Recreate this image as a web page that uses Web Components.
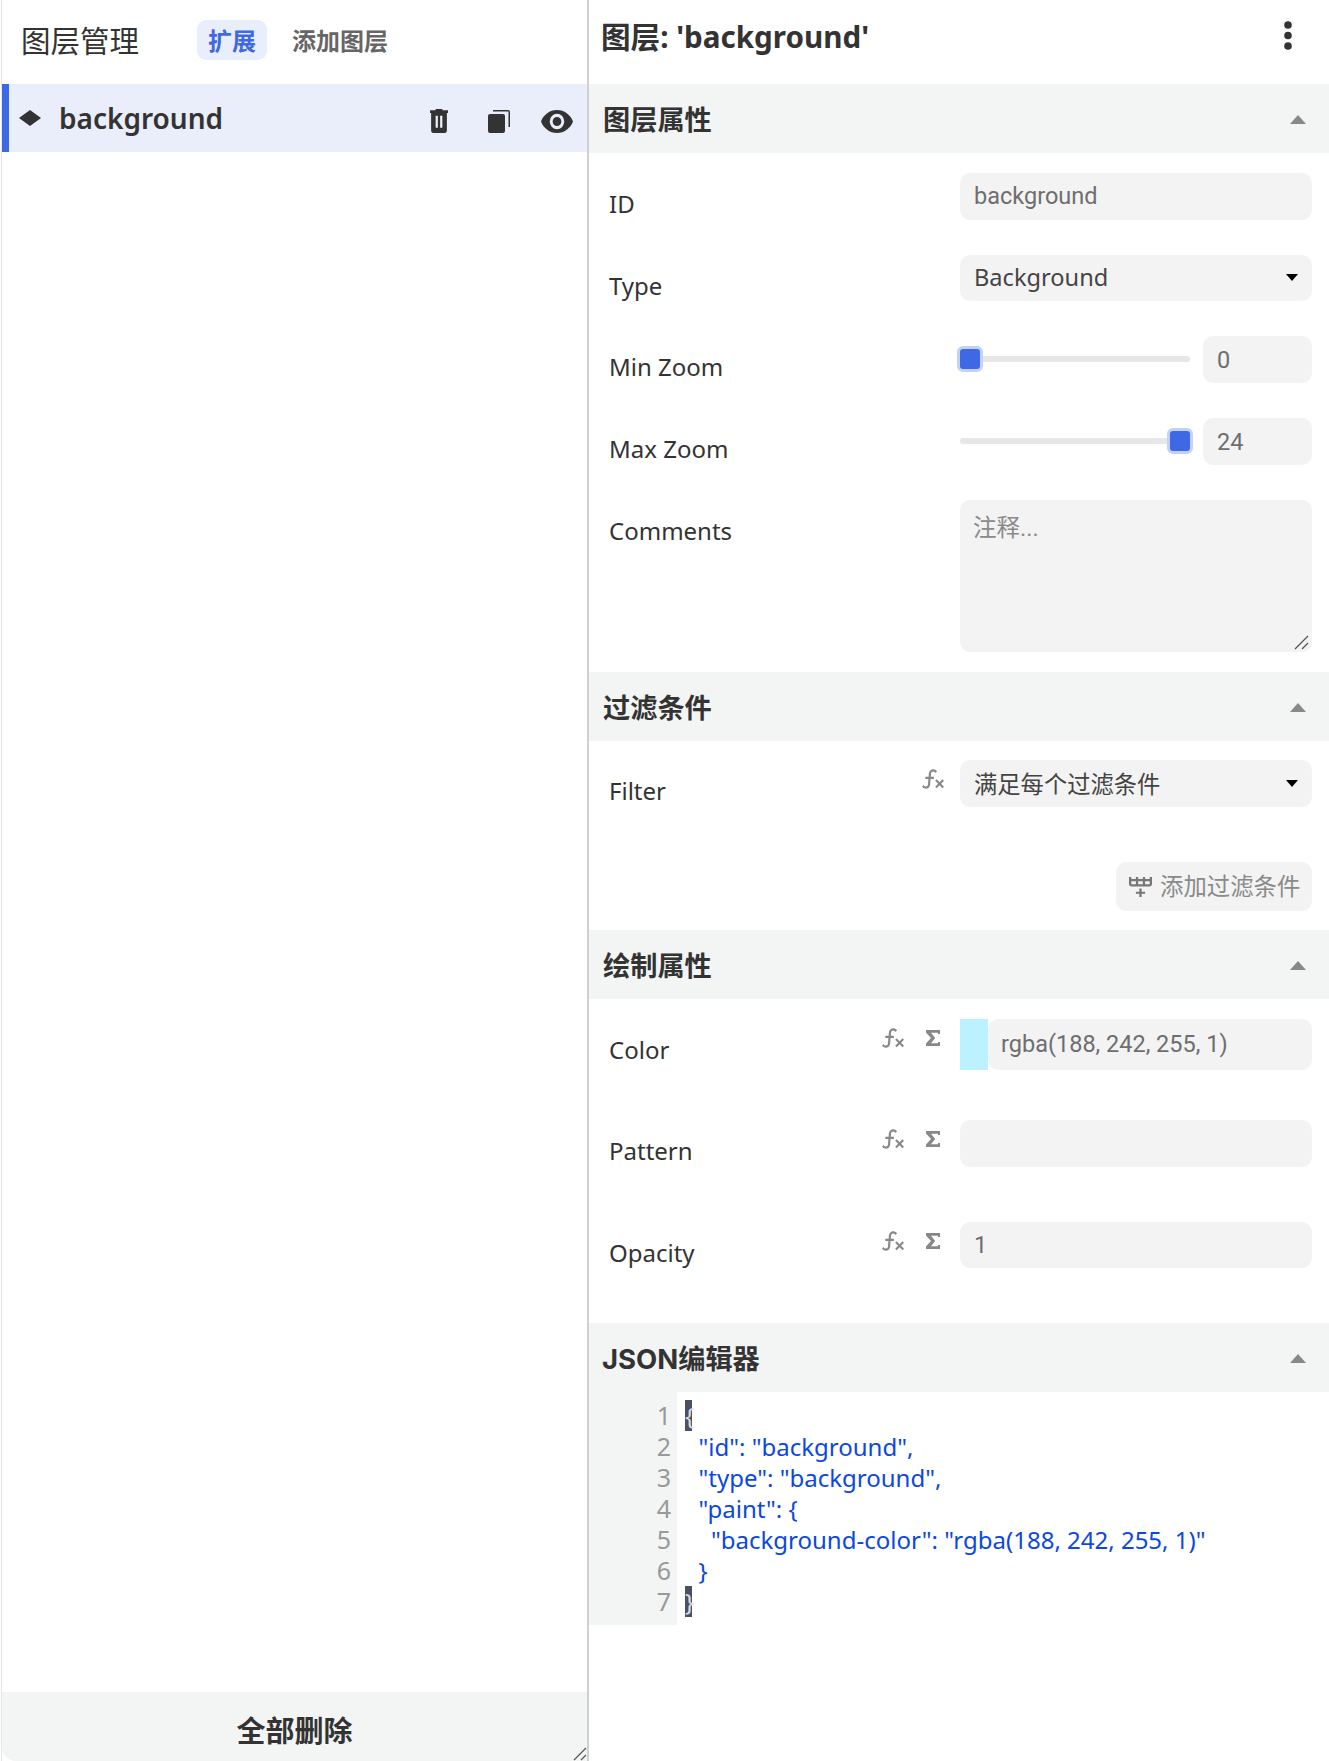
<!DOCTYPE html>
<html lang="zh">
<head>
<meta charset="utf-8">
<title>图层管理</title>
<style>
  html, body { margin: 0; padding: 0; background: #fff; }
  body { font-family: "Noto Sans", "Noto Sans CJK SC", sans-serif; color: #333; }
  app-shell { height: 1761px; }
</style>
</head>
<body>
<app-shell>
  <layer-list slot="left"></layer-list>
  <div slot="right">
    <layer-title>图层: 'background'</layer-title>

    <section-head>图层属性</section-head>
    <prop-row label="ID" pad="20" h="46.5" gap="35"><field-box>background</field-box></prop-row>
    <prop-row label="Type" h="46.5" gap="35"><field-box select>Background</field-box></prop-row>
    <prop-row label="Min Zoom" h="47" gap="35"><zoom-slider value="0"></zoom-slider></prop-row>
    <prop-row label="Max Zoom" h="47" gap="35"><zoom-slider value="24"></zoom-slider></prop-row>
    <prop-row label="Comments" h="152" gap="20"><field-box area>注释...</field-box></prop-row>

    <section-head>过滤条件</section-head>
    <prop-row label="Filter" pad="19" h="47" gap="55" icons="fx" icon-gap="16"><field-box select cjk>满足每个过滤条件</field-box></prop-row>
    <add-filter></add-filter>

    <section-head>绘制属性</section-head>
    <prop-row label="Color" pad="20" h="51" gap="50" icons="fx sigma"><field-box swatch="rgb(188,242,255)">rgba(188, 242, 255, 1)</field-box></prop-row>
    <prop-row label="Pattern" h="47" gap="55" icons="fx sigma"><field-box></field-box></prop-row>
    <prop-row label="Opacity" h="46" gap="55" icons="fx sigma"><field-box>1</field-box></prop-row>

    <section-head latin="Inter"><span style="font-size:27.5px">JSON</span>编辑器</section-head>
    <json-view></json-view>
  </div>
</app-shell>

<script>
  class AppShell extends HTMLElement {
    constructor() {
      super();
      this.attachShadow({mode: 'open'}).innerHTML = `
        <style>
          :host { display: flex; width: 1329px; }
          .left { width: 585px; margin-left: 1px; border-left: 1px solid #e4e4e4; border-right: 2px solid #cfd1d1; height: 100%; display: flex; }
          .right { flex: 1; min-width: 0; }
          ::slotted([slot=left]) { flex: 1; }
        </style>
        <div class="left"><slot name="left"></slot></div>
        <div class="right"><slot name="right"></slot></div>`;
    }
  }

  class LayerList extends HTMLElement {
    constructor() {
      super();
      this.attachShadow({mode: 'open'}).innerHTML = `
        <style>
          :host { display: flex; flex-direction: column; position: relative; }
          header { height: 84px; display: flex; align-items: center; padding: 0 0 4px 19px; box-sizing: border-box; }
          h1 { margin: -2px 0 0; font: 400 29.5px "Noto Sans CJK SC", sans-serif; width: 176px; color: #333; }
          .tab { font: 700 24px "Noto Sans CJK SC", sans-serif; color: #666; height: 40px; line-height: 40px; border-radius: 9px; padding: 0 11px; }
          .tab.on { background: #e9eefb; color: #3e68e4; margin-right: 15px; }
          .tab.off { padding: 0 10px; }
          .item { height: 68px; background: #e9eefa; border-left: 7px solid #3e68e4; display: flex; align-items: center; box-sizing: border-box; }
          .item .diamond { margin-left: 10px; width: 22px; height: 16px; }
          .item b { font: 600 28px "Noto Sans", sans-serif; color: #333; margin: 0 0 0 18px; flex: 1; }
          .item svg { display: block; fill: #333; }
          .acts { display: flex; align-items: center; margin: 6px 14px 0 0; }
          .space { flex: 1; }
          footer { height: 69px; background: #f3f5f5; border-radius: 0 0 0 14px; display: flex; align-items: center; justify-content: center; padding-top: 4px; box-sizing: border-box; font: 700 29px "Noto Sans CJK SC", sans-serif; color: #333; position: relative; }
          footer svg { position: absolute; right: 0; bottom: 0; }
        </style>
        <header><h1>图层管理</h1><span class="tab on">扩展</span><span class="tab off">添加图层</span></header>
        <div class="item">
          <svg class="diamond" viewBox="0 0 22 16" preserveAspectRatio="none"><path d="M11 0 L22 8 L11 16 L0 8 Z"/></svg>
          <b>background</b>
          <div class="acts">
            <svg width="18" height="24" viewBox="4 3 16 18" preserveAspectRatio="none"><path d="M9 3V4H4V6H5V19A2 2 0 0 0 7 21H17A2 2 0 0 0 19 19V6H20V4H15V3H9M9 8H11V17H9V8M13 8H15V17H13V8Z"/></svg>
            <svg style="margin-left:40px" width="22" height="23" viewBox="0 0 22 23"><path d="M2 4h13a2 2 0 0 1 2 2v15a2 2 0 0 1-2 2H2a2 2 0 0 1-2-2V6a2 2 0 0 1 2-2zM5 0h15a2 2 0 0 1 2 2v15h-1.500V1.500H5z"/></svg>
            <svg style="margin-left:31px" width="32" height="23" viewBox="1 4.500 22 15" preserveAspectRatio="none"><path d="M12 9A3 3 0 0 0 9 12A3 3 0 0 0 12 15A3 3 0 0 0 15 12A3 3 0 0 0 12 9M12 17A5 5 0 0 1 7 12A5 5 0 0 1 12 7A5 5 0 0 1 17 12A5 5 0 0 1 12 17M12 4.500C7 4.500 2.730 7.610 1 12C2.730 16.390 7 19.500 12 19.500C17 19.500 21.270 16.390 23 12C21.270 7.610 17 4.500 12 4.500Z"/></svg>
          </div>
        </div>
        <div class="space"></div>
        <footer>全部删除<svg width="16" height="16" viewBox="0 0 16 16"><path d="M15 3 3 15M15 10l-5 5" stroke="#555" stroke-width="1.2" fill="none"/></svg></footer>`;
    }
  }

  class LayerTitle extends HTMLElement {
    constructor() {
      super();
      this.attachShadow({mode: 'open'}).innerHTML = `
        <style>
          :host { display: flex; align-items: center; height: 84px; padding: 0 37px 14px 12px; box-sizing: border-box; justify-content: space-between; font: 700 29.6px "Noto Sans", "Noto Sans CJK SC", sans-serif; color: #333; }
          svg { display: block; }
        </style>
        <span><slot></slot></span>
        <svg width="8" height="29" viewBox="0 0 8 29"><circle cx="4" cy="4" r="3.800" fill="#333"/><circle cx="4" cy="14.500" r="3.800" fill="#333"/><circle cx="4" cy="25" r="3.800" fill="#333"/></svg>`;
    }
  }

  class SectionHead extends HTMLElement {
    constructor() {
      super();
      this.attachShadow({mode: 'open'}).innerHTML = `
        <style>
          :host { display: flex; align-items: center; justify-content: space-between; height: 69px; background: #f3f5f5; padding: 0 23px 2px 14px; box-sizing: border-box; font: 700 27.2px "Noto Sans", "Noto Sans CJK SC", sans-serif; color: #333; }
          :host([latin]) { font-family: Inter, "Noto Sans CJK SC", sans-serif; padding-left: 13px; }
          i { width: 0; height: 0; border: 8.500px solid transparent; border-top: 0; border-bottom: 9px solid #888; margin-top: 3px; }
        </style>
        <span><slot></slot></span><i></i>`;
    }
  }

  const ICONS = {
    fx: `<svg width="22" height="20" viewBox="2 3 20 18" preserveAspectRatio="none"><path fill="#888" d="M12.420 5.290C11.320 5.190 10.350 6 10.250 7.110L10 10H12.820V12H9.820L9.380 17.070C9.180 19.270 7.240 20.900 5.040 20.700C3.790 20.590 2.660 19.900 2 18.830L3.500 17.330C3.830 18.380 4.960 18.970 6 18.630C6.780 18.390 7.330 17.700 7.400 16.890L7.820 12H5V10H8L8.270 6.930C8.460 4.730 10.390 3.100 12.600 3.300C13.860 3.410 15 4.100 15.660 5.170L14.160 6.670C13.910 5.900 13.230 5.360 12.420 5.290M22 13.650L20.650 12.300L18 14.940L15.350 12.300L14 13.650L16.650 16.300L14 18.940L15.350 20.300L18 17.650L20.650 20.300L22 18.940L19.350 16.300L22 13.650Z"/></svg>`,
    sigma: `<svg width="14" height="16" viewBox="0 0 14 16"><path fill="#888" d="M0 0H14V4H12V2.700H5L9.200 8L5 13.300H12V12H14V16H0V13.500L5 8L0 2.500Z"/></svg>`
  };

  class PropRow extends HTMLElement {
    constructor() {
      super();
      this.attachShadow({mode: 'open'});
    }
    connectedCallback() {
      const icons = (this.getAttribute('icons') || '').split(' ').filter(Boolean);
      this.shadowRoot.innerHTML = `
        <style>
          :host { display: grid; grid-template-columns: 1fr 352px; box-sizing: border-box;
            margin-top: ${this.getAttribute('pad') || 0}px;
            height: ${+this.getAttribute('h') + +this.getAttribute('gap')}px;
            padding-right: 17px; align-items: start; }
          .label { padding-left: 20px; display: flex; justify-content: space-between; align-items: flex-start; font: 400 24px/1 "Noto Sans", sans-serif; color: #333; }
          .label span { margin-top: 19px; }
          .icons { display: flex; gap: 22px; margin: 9px ${this.getAttribute('icon-gap') || 20}px 0 0; align-items: center; }
          .icons svg { display: block; }
          .ctl { height: ${this.getAttribute('h')}px; }
        </style>
        <div class="label"><span>${this.getAttribute('label')}</span><div class="icons">${icons.map(n => ICONS[n]).join('')}</div></div>
        <div class="ctl"><slot></slot></div>`;
    }
  }

  class FieldBox extends HTMLElement {
    constructor() {
      super();
      this.attachShadow({mode: 'open'});
    }
    connectedCallback() {
      const sw = this.getAttribute('swatch');
      const isSel = this.hasAttribute('select');
      const isArea = this.hasAttribute('area');
      const selFont = this.hasAttribute('cjk') ? '23.3px' : '23.6px';
      this.shadowRoot.innerHTML = `
        <style>
          :host { display: flex; height: 100%; }
          .swatch { width: 28px; background: ${sw}; flex: none; }
          .box { flex: 1; background: #f3f3f3; border-radius: 10px; display: flex; align-items: ${isArea ? 'flex-start' : 'center'}; justify-content: space-between;
            padding: ${isArea ? '9px 14px 0 13px' : '0 14px'}; box-sizing: border-box; position: relative;
            font: 400 ${isSel ? selFont + ' "Noto Sans", "Noto Sans CJK SC", sans-serif' : '23.5px Roboto, "Noto Sans CJK SC", sans-serif'}; color: ${isSel ? '#444' : isArea ? '#8a8a8a' : '#6e6e6e'}; }
          .box.sw { padding-left: 13px; }
          span { position: relative; top: ${isSel ? -1 : sw ? -1 : 0}px; }
          i { width: 0; height: 0; border: 6.500px solid transparent; border-bottom: 0; border-top: 7px solid #000; }
          svg { position: absolute; right: 2px; bottom: 2px; }
        </style>
        ${sw ? '<div class="swatch"></div>' : ''}
        <div class="box ${sw ? 'sw' : ''}"><span><slot></slot></span>
          ${isSel ? '<i></i>' : ''}
          ${isArea ? '<svg width="16" height="16" viewBox="0 0 16 16"><path d="M14 2 1 15M14 9l-6 6" stroke="#555" stroke-width="1.300" fill="none"/></svg>' : ''}
        </div>`;
    }
  }

  class ZoomSlider extends HTMLElement {
    constructor() {
      super();
      this.attachShadow({mode: 'open'});
    }
    connectedCallback() {
      const v = this.getAttribute('value');
      this.shadowRoot.innerHTML = `
        <style>
          :host { display: flex; height: 100%; gap: 13px; align-items: center; }
          .track { width: 230px; height: 6px; border-radius: 3px; background: #e6e7e7; position: relative; margin-top: -1px; }
          .thumb { position: absolute; top: -10px; left: ${v === '0' ? '-3px' : '207px'}; width: 20px; height: 20px; background: #3e68e4; border: 3px solid #c4d1f6; border-radius: 6px; }
          .num { flex: 1; height: 100%; background: #f3f3f3; border-radius: 10px; padding-left: 14px; display: flex; align-items: center; font: 400 23.5px Roboto, sans-serif; color: #6e6e6e; }
        </style>
        <div class="track"><div class="thumb"></div></div>
        <div class="num">${v}</div>`;
    }
  }

  class AddFilter extends HTMLElement {
    constructor() {
      super();
      this.attachShadow({mode: 'open'}).innerHTML = `
        <style>
          :host { display: flex; justify-content: flex-end; padding-right: 17px; height: 68px; box-sizing: border-box; }
          .btn { height: 49px; width: 196px; box-sizing: border-box; background: #f3f3f3; border-radius: 10px; display: flex; align-items: center; gap: 8px; padding-left: 13px; font: 400 23.4px "Noto Sans CJK SC", sans-serif; color: #8a8a8a; }
          span { position: relative; top: -2px; }
          svg { display: block; fill: #777; }
        </style>
        <div class="btn"><svg width="23" height="20" viewBox="2 3 20 19" preserveAspectRatio="none"><path d="M22 10A2 2 0 0 1 20 12H4A2 2 0 0 1 2 10V3H4V5H8V3H10V5H14V3H16V5H20V3H22V10M4 10H8V7H4V10M10 10H14V7H10V10M20 10V7H16V10H20M11 14H13V17H16V19H13V22H11V19H8V17H11V14Z"/></svg><span>添加过滤条件</span></div>`;
    }
  }

  class JsonView extends HTMLElement {
    constructor() {
      super();
      const lines = [
        '{',
        '  "id": "background",',
        '  "type": "background",',
        '  "paint": {',
        '    "background-color": "rgba(188, 242, 255, 1)"',
        '  }',
        '}'
      ];
      this.attachShadow({mode: 'open'}).innerHTML = `
        <style>
          :host { display: block; font: 400 24px/31px "Noto Sans", sans-serif; }
          .wrap { display: flex; width: 100%; }
          .gutter { width: 88px; background: #f3f5f5; padding: 8px 6px 0 0; box-sizing: border-box; height: 233px; text-align: right; color: #999; font-size: 25px; }
          .code { padding: 8px 0 0 8px; color: #0b47e0; white-space: pre; }
          .code div { height: 31px; }
          .ind { padding-left: 1px; }
          .b { background: #4b5162; color: #ddd; display: inline-block; width: 7px; height: 31px; line-height: 31px; vertical-align: top; overflow: visible; }
        </style>
        <div class="wrap">
          <div class="gutter">${lines.map((_, i) => `<div>${i + 1}</div>`).join('')}</div>
          <div class="code">${lines.map(t =>
            t.length === 1 ? `<div><span class="b">${t}</span></div>` : `<div class="ind">${t}</div>`
          ).join('')}</div>
        </div>`;
    }
  }

  customElements.define('app-shell', AppShell);
  customElements.define('layer-list', LayerList);
  customElements.define('layer-title', LayerTitle);
  customElements.define('section-head', SectionHead);
  customElements.define('prop-row', PropRow);
  customElements.define('field-box', FieldBox);
  customElements.define('zoom-slider', ZoomSlider);
  customElements.define('add-filter', AddFilter);
  customElements.define('json-view', JsonView);
</script>
</body>
</html>
